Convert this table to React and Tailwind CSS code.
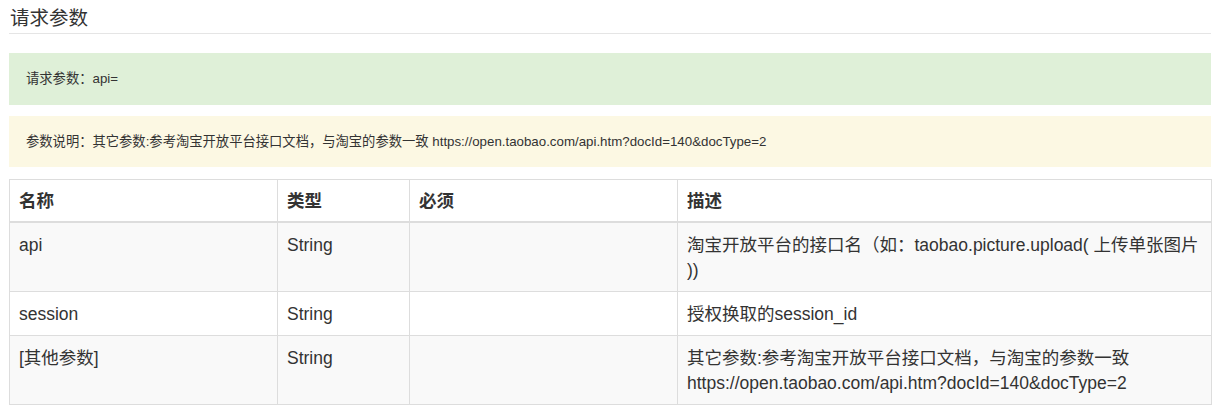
import React from 'react';

const FONT = { fontFamily: '"Liberation Sans", "Noto Sans CJK SC", sans-serif' };

const rows = [
  { name: 'api', type: 'String', required: '', desc: '淘宝开放平台的接口名（如：taobao.picture.upload( 上传单张图片 ))' },
  { name: 'session', type: 'String', required: '', desc: '授权换取的session_id' },
  {
    name: '[其他参数]',
    type: 'String',
    required: '',
    desc: '其它参数:参考淘宝开放平台接口文档，与淘宝的参数一致 https://open.taobao.com/api.htm?docId=140&docType=2',
  },
];

export default function App() {
  return (
    <div className="w-[1225px] h-[420px] bg-white text-[#333]" style={FONT}>
      <div className="ml-[9px] w-[1202px]">
        <div className="pt-[6px] pb-[2px] border-b border-[#e5e5e5]">
          <h3 className="pl-[1px] text-[19.5px] leading-[25px] font-normal">请求参数</h3>
        </div>

        <div className="mt-[19px] bg-[#dff0d8] px-[17px] py-[16px] text-[13.3px] leading-[20px]">
          请求参数：api=
        </div>

        <div className="mt-[11px] bg-[#fcf8e3] px-[17px] py-[15.5px] text-[13.3px] leading-[20px]">
          参数说明：其它参数:参考淘宝开放平台接口文档，与淘宝的参数一致 https://open.taobao.com/api.htm?docId=140&amp;docType=2
        </div>

        <table className="mt-[12px] w-[1202px] table-fixed border-collapse text-[17.5px] leading-[25px]">
          <colgroup>
            <col className="w-[268px]" />
            <col className="w-[132px]" />
            <col className="w-[268px]" />
            <col className="w-[534px]" />
          </colgroup>
          <thead>
            <tr>
              {['名称', '类型', '必须', '描述'].map((h) => (
                <th key={h} className="border border-[#ddd] border-b-2 px-[9px] py-[8.5px] leading-[24px] text-left align-top font-bold">
                  {h}
                </th>
              ))}
            </tr>
          </thead>
          <tbody>
            {rows.map((r, i) => (
              <tr key={r.name} className={i % 2 === 0 ? 'bg-[#f9f9f9]' : 'bg-white'}>
                <td className="border border-[#ddd] px-[9px] pt-[10px] pb-[8px] align-top">{r.name}</td>
                <td className="border border-[#ddd] px-[9px] pt-[10px] pb-[8px] align-top">{r.type}</td>
                <td className="border border-[#ddd] px-[9px] pt-[10px] pb-[8px] align-top">{r.required}</td>
                <td className="border border-[#ddd] px-[9px] pt-[10px] pb-[8px] align-top break-words">{r.desc}</td>
              </tr>
            ))}
          </tbody>
        </table>
      </div>
    </div>
  );
}
